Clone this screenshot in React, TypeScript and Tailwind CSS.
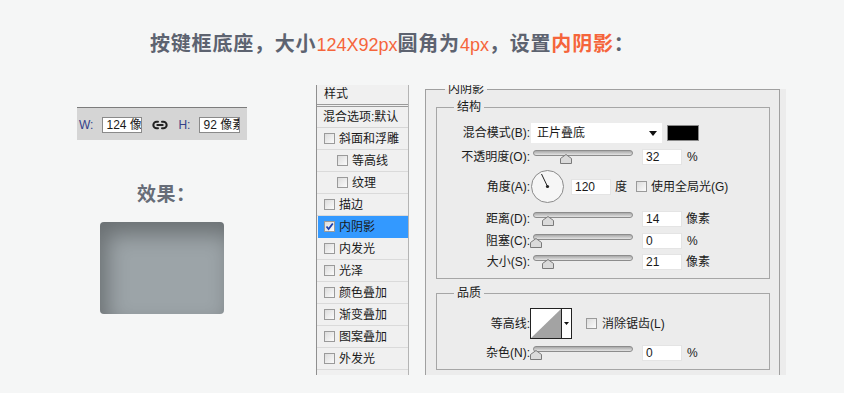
import { Link2 } from "lucide-react";

const F = "font-['Liberation_Sans','Noto_Sans_CJK_SC',sans-serif]";

function Box({ checked = false }: { checked?: boolean }) {
  return (
    <span className="inline-flex w-[11px] h-[11px] shrink-0 items-center justify-center border border-[#9a9a9a] bg-gradient-to-br from-[#dcdcdc] to-[#fbfbfb]">
      {checked && (
        <svg width="9" height="9" viewBox="0 0 9 9">
          <path d="M1.5 4.5 L3.6 7 L7.8 1.5" fill="none" stroke="#1a3fb0" strokeWidth="1.8" />
        </svg>
      )}
    </span>
  );
}

function Slider({ pos }: { pos: number }) {
  return (
    <div className="relative w-[100px] h-[14px] ml-[3px] shrink-0">
      <div className="h-[6px] rounded-full border border-[#8c8c8c] bg-gradient-to-b from-[#a9a9a9] to-[#e4e4e4]" />
      <svg className="absolute top-[4px]" style={{ left: pos - 6 }} width="12" height="10" viewBox="0 0 12 10">
        <path d="M6 0.5 L11.5 4.5 V9.5 H0.5 V4.5 Z" fill="#dadada" stroke="#7a7a7a" />
      </svg>
    </div>
  );
}

function Num({ v, ml = "ml-[9px]" }: { v: string; ml?: string }) {
  return (
    <div className={`${ml} w-[40px] h-[16px] shrink-0 bg-white border border-[#e4e4e4] pl-[3px] text-[12px] leading-[14px] text-[#1a1a1a]`}>
      {v}
    </div>
  );
}

function Label({ t }: { t: string }) {
  return <div className="w-[93px] shrink-0 text-right text-[12px] leading-[16px] text-[#1a1a1a] whitespace-nowrap">{t}</div>;
}

const styleRows: { t: string; indent?: boolean; sel?: boolean; checked?: boolean }[] = [
  { t: "斜面和浮雕" },
  { t: "等高线", indent: true },
  { t: "纹理", indent: true },
  { t: "描边" },
  { t: "内阴影", sel: true, checked: true },
  { t: "内发光" },
  { t: "光泽" },
  { t: "颜色叠加" },
  { t: "渐变叠加" },
  { t: "图案叠加" },
  { t: "外发光" },
];

export default function App() {
  return (
    <div className={`w-[844px] h-[393px] bg-[#f5f6f6] overflow-hidden flex flex-col ${F}`}>
      {/* title */}
      <div className="h-[85px] shrink-0 pt-[30px] pl-[150px] text-[20px] leading-[28px] font-bold text-[#5d6370] whitespace-nowrap tracking-[0.8px]">
        按键框底座，大小<span className="text-[#f5653b] font-normal text-[18px] tracking-[0px]">124X92px</span>圆角为<span className="text-[#f5653b] font-normal text-[18px] tracking-[0px]">4px</span>，设置<span className="text-[#f5653b]">内阴影</span>：
      </div>

      <div className="flex flex-1">
        {/* left column */}
        <div className="ml-[77px] w-[170px] shrink-0 flex flex-col">
          <div className="mt-[22px] h-[33px] border-t border-[#7c7c7c] bg-[#d5d5d5] pt-[9px] flex items-start text-[12px] leading-[16px]">
            <span className="ml-[2px] text-[#34418a]">W:</span>
            <div className="ml-[9px] w-[40px] h-[16px] bg-white border border-[#8a8a8a] pl-[3px] overflow-hidden whitespace-nowrap text-[#1a1a1a] leading-[14px]">124 像素</div>
            <Link2 className="ml-[10px] mt-[0px]" size={16} strokeWidth={3} color="#222" />
            <span className="ml-[10px] text-[#34418a]">H:</span>
            <div className="ml-[9px] w-[41px] h-[16px] bg-white border border-[#8a8a8a] pl-[3px] overflow-hidden whitespace-nowrap text-[#1a1a1a] leading-[14px]">92 像素</div>
          </div>
          <div className="mt-[43px] ml-[60px] text-[19px] leading-[24px] font-bold text-[#676d78] tracking-[0.5px]">效果：</div>
          <div className="mt-[15px] ml-[23px] w-[124px] h-[92px] rounded-[4px] bg-[#9ca4a8] shadow-[inset_7px_12px_21px_rgba(0,0,0,0.32)]" />
        </div>

        {/* styles list */}
        <div className="ml-[69px] w-[93px] h-[290px] shrink-0 bg-[#f0f0f0] border-l border-[#8f8f8f] border-r border-r-[#b4b4b4] flex flex-col text-[12px] text-[#1a1a1a] overflow-hidden">
          <div className="h-[22px] shrink-0 pl-[7px] leading-[16px] pt-[1px] border-b-[3px] border-double border-[#9a9a9a]">样式</div>
          <div className="h-[21px] shrink-0 pl-[6px] leading-[20px] border-b border-[#d6d6d6] whitespace-nowrap">混合选项:默认</div>
          {styleRows.map((r) => (
            <div
              key={r.t}
              className={`h-[22px] shrink-0 flex items-center border-b whitespace-nowrap ${r.sel ? "bg-[#3399ff] border-[#3399ff] ml-[1px]" : "border-[#dadada]"} ${r.indent ? "pl-[20px]" : r.sel ? "pl-[6px]" : "pl-[7px]"}`}
            >
              <Box checked={r.checked} />
              <span className="ml-[4px] leading-[16px]">{r.t}</span>
            </div>
          ))}
        </div>

        {/* right panel */}
        <div className="ml-[16px] w-[361px] h-[290px] shrink-0 overflow-hidden flex flex-col">
          <div className="mt-[4px] flex-1 bg-[#ececec] pr-[6px]">
            <fieldset className="-mt-[8px] h-[300px] border border-b-0 border-[#a0a0a0]">
              <legend className="ml-[19px] px-[3px] text-[12px] leading-[16px] text-[#1a1a1a]">内阴影</legend>

              {/* 结构 */}
              <fieldset className="mt-[2px] ml-[10px] w-[334px] border border-[#a6a6a6] pt-[8px] pb-[8px]">
                <legend className="ml-[17px] px-[3px] text-[12px] leading-[16px] text-[#1a1a1a]">结构</legend>
                <div className="flex items-center h-[20px]">
                  <Label t="混合模式(B):" />
                  <div className="ml-[1px] w-[131px] h-[20px] bg-white flex items-center pl-[6px] pr-[5px] text-[12px] text-[#1a1a1a]">
                    <span className="flex-1">正片叠底</span>
                    <svg width="8" height="5" viewBox="0 0 8 5"><path d="M0 0 H8 L4 5 Z" fill="#111" /></svg>
                  </div>
                  <div className="ml-[5px] w-[32px] h-[16px] bg-black border border-[#8a8a8a]" />
                </div>
                <div className="flex items-center h-[16px] mt-[6px]">
                  <Label t="不透明度(O):" />
                  <Slider pos={33} />
                  <Num v="32" />
                  <span className="ml-[5px] text-[12px] text-[#1a1a1a]">%</span>
                </div>
                <div className="flex items-center h-[33px] mt-[5px]">
                  <Label t="角度(A):" />
                  <svg className="ml-[1px] shrink-0" width="33" height="33" viewBox="0 0 33 33">
                    <circle cx="16.5" cy="16.5" r="16" fill="#f6f6f6" stroke="#8a8a8a" />
                    <line x1="16.5" y1="16.5" x2="10.5" y2="4" stroke="#222" strokeWidth="1" />
                    <circle cx="16.5" cy="16.5" r="1.6" fill="#222" />
                  </svg>
                  <Num v="120" ml="ml-[7px]" />
                  <span className="ml-[4px] text-[12px] text-[#1a1a1a]">度</span>
                  <span className="ml-[9px] flex"><Box /></span>
                  <span className="ml-[4px] text-[12px] text-[#1a1a1a] whitespace-nowrap">使用全局光(G)</span>
                </div>
                <div className="flex items-center h-[16px] mt-[8px]">
                  <Label t="距离(D):" />
                  <Slider pos={15} />
                  <Num v="14" />
                  <span className="ml-[4px] text-[12px] text-[#1a1a1a]">像素</span>
                </div>
                <div className="flex items-center h-[16px] mt-[6px]">
                  <Label t="阻塞(C):" />
                  <Slider pos={3} />
                  <Num v="0" />
                  <span className="ml-[5px] text-[12px] text-[#1a1a1a]">%</span>
                </div>
                <div className="flex items-center h-[16px] mt-[5px]">
                  <Label t="大小(S):" />
                  <Slider pos={15} />
                  <Num v="21" />
                  <span className="ml-[4px] text-[12px] text-[#1a1a1a]">像素</span>
                </div>
              </fieldset>

              {/* 品质 */}
              <fieldset className="mt-[6px] ml-[10px] w-[334px] border border-[#a6a6a6] pt-[7px] pb-[8px]">
                <legend className="ml-[17px] px-[3px] text-[12px] leading-[16px] text-[#1a1a1a]">品质</legend>
                <div className="flex items-center h-[31px]">
                  <Label t="等高线:" />
                  <div className="w-[42px] h-[31px] shrink-0 border border-[#222] bg-white flex">
                    <svg width="30" height="29" viewBox="0 0 30 29" className="shrink-0">
                      <path d="M0 29 L30 0 V29 Z" fill="#a3a3a3" />
                    </svg>
                    <div className="flex-1 border-l border-[#222] flex items-center justify-center">
                      <svg width="5" height="3" viewBox="0 0 5 3"><path d="M0 0 H5 L2.5 3 Z" fill="#111" /></svg>
                    </div>
                  </div>
                  <span className="ml-[14px] flex"><Box /></span>
                  <span className="ml-[5px] text-[12px] text-[#1a1a1a] whitespace-nowrap">消除锯齿(L)</span>
                </div>
                <div className="flex items-center h-[16px] mt-[6px]">
                  <Label t="杂色(N):" />
                  <Slider pos={3} />
                  <Num v="0" />
                  <span className="ml-[5px] text-[12px] text-[#1a1a1a]">%</span>
                </div>
              </fieldset>
            </fieldset>
          </div>
        </div>
      </div>
    </div>
  );
}
